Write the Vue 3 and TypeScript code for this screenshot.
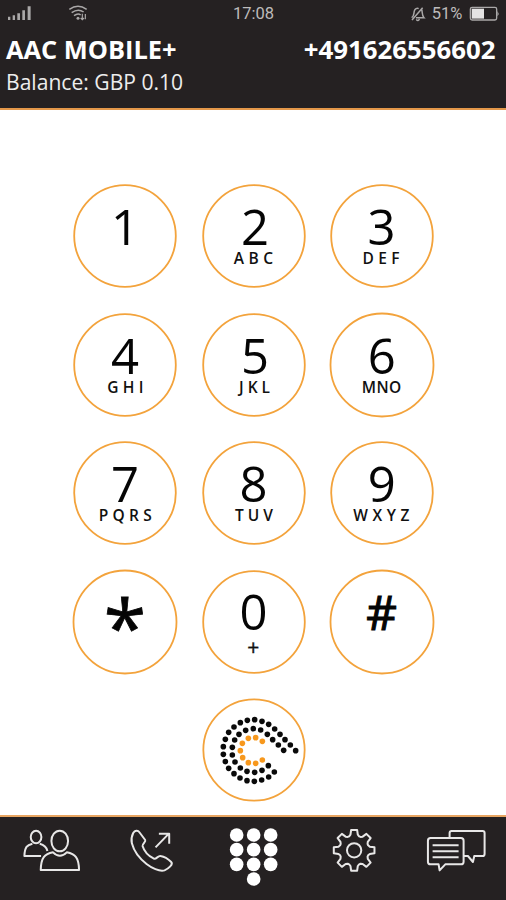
<script setup lang="ts">
interface Key {
  label: string
  x: number
  y: number
  size?: number
  outline?: number
  sub?: string
  subX?: number
  subY?: number
  subWidth?: number
  radius?: number
}

// Label positions are relative to the centre of each key.
const keys: Key[] = [
  { label: '1', x: 0, y: 9.4 },
  { label: '2', x: 1, y: 9.4, sub: 'ABC', subX: -20.2, subY: 28, subWidth: 39.3 },
  { label: '3', x: -0.5, y: 9.4, sub: 'DEF', subX: -19.4, subY: 28, subWidth: 37 },
  { label: '4', x: 0, y: 9.2, sub: 'GHI', subX: -17.7, subY: 27.7, subWidth: 36.2 },
  { label: '5', x: 1, y: 9.2, sub: 'JKL', subX: -14.9, subY: 27.7, subWidth: 30.8 },
  { label: '6', x: -0.2, y: 9.2, sub: 'MNO', subX: -20.3, subY: 27.7, subWidth: 39.4, radius: 51.5 },
  { label: '7', x: 0, y: 8.9, sub: 'PQRS', subX: -26.3, subY: 27.7, subWidth: 53 },
  { label: '8', x: -0.5, y: 8.9, sub: 'TUV', subX: -19, subY: 27.7, subWidth: 38 },
  { label: '9', x: -0.2, y: 8.9, sub: 'WXYZ', subX: -28.8, subY: 27.7, subWidth: 56.3 },
  { label: '*', x: 0, y: 34, size: 77, outline: 0.8, radius: 51.5 },
  { label: '0', x: -0.5, y: 8.4, sub: '+', subX: -6.7, subY: 32.5, subWidth: 12 },
  { label: '#', x: -0.3, y: 8.2, size: 47.5, outline: 1.1, radius: 51.5 },
]

type Point = [number, number]

const blackDots: Point[] = [
  [300, 176], [284, 159], [268, 143], [253, 127], [237, 111], [219, 97], [199, 88], [177, 83],
  [155, 85], [134, 92], [115, 105], [99, 121], [89, 142], [83, 164], [83, 187], [89, 209],
  [99, 229], [115, 245], [133, 258], [154, 266], [176, 268], [198, 264], [219, 255], [236, 240],
  [264, 175], [248, 159], [231, 143], [215, 127], [195, 114], [173, 110], [150, 115], [130, 127],
  [117, 144], [110, 166], [110, 189], [118, 210], [134, 228], [154, 238], [177, 241], [199, 235],
  [218, 221],
]
const orangeDots: Point[] = [
  [200, 148], [180, 137], [158, 139], [140, 154], [134, 176], [141, 197], [158, 212], [180, 214],
  [200, 204],
]
const padDots: Point[] = [
  [170, 90], [221, 90], [272, 90],
  [170, 134], [221, 134], [272, 134],
  [170, 178], [221, 178], [272, 178],
  [221, 222],
]

function gearPath(cx: number, cy: number): string {
  const parts: string[] = []
  for (let i = 0; i < 8; i++) {
    const a = (i * Math.PI) / 4
    const profile: Point[] = [[42, -15], [47, -11], [61, -9], [61, 9], [47, 11], [42, 15]]
    for (const [r, t] of profile) {
      const px = cx + r * Math.cos(a) - t * Math.sin(a)
      const py = cy + r * Math.sin(a) + t * Math.cos(a)
      parts.push(`${px.toFixed(1)} ${py.toFixed(1)}`)
    }
  }
  return `M${parts.join('L')}Z`
}
const gear = gearPath(103, 136)
</script>

<template>
  <div class="screen">
    <header class="header">
      <div class="status">
        <div class="side">
          <svg class="signal" viewBox="20 15 76 50" aria-hidden="true">
            <path d="M23 50h7v10h-7zM37 46h7v14h-7zM51 40h8v20h-8zM66 31h8v29h-8zM82 19h9v41h-9z" />
          </svg>
          <svg class="wifi" viewBox="205 15 60 50" aria-hidden="true">
            <path d="M209 28Q235 10 261 28M216 38Q235 24 252 36M223 47Q235 38 243 45" />
            <circle cx="235" cy="55" r="4.5" />
            <path d="M248 41v18m-5-5 5 5 5-5M257 58V42" class="thin" />
          </svg>
        </div>
        <span class="time">17:08</span>
        <div class="side right">
          <svg class="bell" viewBox="472 18 46 48" aria-hidden="true">
            <path d="M477 53c8-5 6-13 8-20 2-6 8-10 13-7M507 28c3 8 0 18 7 25h-24M478 60l32-37M491 58c3 5 8 5 9-1" />
          </svg>
          <span class="percent">51%</span>
          <svg class="battery" viewBox="649 16 92 46" aria-hidden="true">
            <rect x="653" y="20" width="79" height="38" rx="5" />
            <path d="M657 24h37v30h-37z" class="level" />
            <path d="M735 31q5 8 0 16z" class="level" />
          </svg>
        </div>
      </div>
      <div class="account">
        <h1>AAC MOBILE+</h1>
        <span class="number">+491626556602</span>
      </div>
      <p class="balance">Balance: GBP 0.10</p>
    </header>

    <main class="dialer">
      <div class="keys">
        <button v-for="key in keys" :key="key.label" class="key" type="button">
          <svg viewBox="-52 -52 104 104">
            <circle class="ring" :r="key.radius ?? 50.8" />
            <text
              class="digit"
              :x="key.x"
              :y="key.y"
              :font-size="key.size ?? 49"
              :stroke-width="key.outline ?? 0"
            >{{ key.label }}</text>
            <text
              v-if="key.sub"
              :class="['letters', { plus: key.sub === '+' }]"
              :x="key.subX"
              :y="key.subY"
              :textLength="key.subWidth"
            >{{ key.sub }}</text>
          </svg>
        </button>
      </div>
      <button class="key" type="button" aria-label="Call">
        <svg viewBox="19 18 312 312">
          <circle class="ring logo-ring" cx="175" cy="174" r="152" />
          <circle v-for="([x, y], i) in blackDots" :key="`b${i}`" :cx="x" :cy="y" r="8.4" class="dot" />
          <circle v-for="([x, y], i) in orangeDots" :key="`o${i}`" :cx="x" :cy="y" r="8.4" class="dot orange" />
        </svg>
      </button>
    </main>

    <nav class="nav">
      <a class="tab" aria-label="Contacts">
        <svg viewBox="46.8 36 210 180">
          <ellipse cx="107" cy="96" rx="16" ry="19" />
          <path d="M96 116c-16 4-23 10-24 37h50M118 116c12 3 20 7 23 22" />
          <ellipse cx="178" cy="108" rx="25" ry="31" />
          <path d="M158 142c-26 5-36 16-37 53h115c-1-37-11-48-37-53-13 13-28 13-41 0z" />
        </svg>
      </a>
      <a class="tab" aria-label="Calls">
        <svg viewBox="350.4 36 210 180">
          <path d="M399 84c5-8 14-9 18-3l18 24c3 5-9 11-8 18 5 16 18 30 34 38 7 3 13-10 20-8 12 2 23 9 32 18 7 7-8 20-20 25-15 5-40-8-54-19-22-17-38-39-44-62-3-12-1-21 4-31z" />
          <path d="M466 127l40-41M476 86h31v30" />
        </svg>
      </a>
      <a class="tab" aria-label="Keypad">
        <svg viewBox="114 36 210 180" class="solid">
          <circle v-for="([x, y], i) in padDots" :key="i" :cx="x" :cy="y" r="20.5" />
        </svg>
      </a>
      <a class="tab" aria-label="Settings">
        <svg viewBox="-2.4 36 210 180">
          <path :d="gear" />
          <circle cx="103" cy="136" r="21.5" />
        </svg>
      </a>
      <a class="tab" aria-label="Messages">
        <svg viewBox="301.2 36 210 180">
          <path d="M390 98V84q0-6 6-6h93q6 0 6 6v62q0 7-6 7h-25l-4 18-15-18h-12" />
          <path d="M333 99h91q8 0 8 8v63q0 8-8 8h-47l-17 18-3-18h-24q-8 0-8-8v-63q0-8 8-8z" />
          <path d="M339 121h78M339 139h78M339 157h78" />
        </svg>
      </a>
    </nav>
  </div>
</template>

<style>
body {
  margin: 0;
}
</style>

<style scoped>
.screen {
  display: flex;
  flex-direction: column;
  width: 506px;
  height: 900px;
  background: #fff;
  font-family: "Open Sans", "Noto Sans", sans-serif;
  overflow: hidden;
}
.header {
  box-sizing: border-box;
  height: 110px;
  background: #252122;
  border-bottom: 2px solid #e5984a;
  color: #fff;
}
.status {
  display: flex;
  align-items: center;
  height: 27px;
  padding: 0 6px 0 7px;
  font: 16.5px/27px Roboto, sans-serif;
  color: #bdbbbb;
}
.side {
  flex: 1;
  display: flex;
  align-items: center;
}
.right {
  justify-content: flex-end;
}
.status svg {
  display: block;
  fill: #aaa8a8;
}
.signal {
  width: 25.3px;
  height: 16.7px;
}
.wifi {
  width: 20px;
  height: 16.7px;
  margin-left: 36px;
}
.wifi path,
.bell path {
  fill: none;
  stroke: #aaa8a8;
  stroke-width: 4.5;
}
.wifi .thin {
  stroke-width: 3.5;
}
.bell {
  width: 15.3px;
  height: 16px;
  margin-right: 6px;
}
.percent {
  margin-right: 7px;
}
.battery {
  width: 30.7px;
  height: 15.3px;
}
.battery rect {
  fill: none;
  stroke: #aaa8a8;
  stroke-width: 4;
}
.battery .level {
  fill: #e4e3e3;
}
.account {
  display: flex;
  justify-content: space-between;
  padding: 0 10.5px 0 6px;
  height: 42px;
  line-height: 44px;
  font-weight: 700;
}
h1 {
  margin: 0;
  font-size: 25.4px;
  line-height: inherit;
}
.number {
  font-size: 25.8px;
}
.balance {
  margin: 0;
  padding-left: 6px;
  font-size: 21.1px;
  line-height: 26px;
  color: #ededed;
}
.dialer {
  flex: 1;
  display: flex;
  flex-direction: column;
  align-items: center;
  gap: 24.4px;
  padding: 74.4px 0 0 1px;
}
.keys {
  display: grid;
  grid-template-columns: repeat(3, 104px);
  gap: 24.4px;
}
.key {
  width: 104px;
  height: 104px;
  padding: 0;
  border: 0;
  background: none;
  font-family: inherit;
}
.key svg {
  display: block;
  width: 104px;
  height: 104px;
  overflow: visible;
}
.ring {
  fill: none;
  stroke: #f3a33c;
  stroke-width: 1.8;
}
.logo-ring {
  stroke-width: 5.4;
}
.digit {
  text-anchor: middle;
  fill: #050505;
  stroke: #050505;
}
.letters {
  font-size: 15.5px;
  font-weight: 600;
  fill: #111;
}
.plus {
  font-size: 21px;
  font-weight: 400;
  stroke: #111;
  stroke-width: 0.4;
}
.dot {
  fill: #0a0a0a;
}
.dot.orange {
  fill: #f7981d;
}
.nav {
  box-sizing: border-box;
  display: grid;
  grid-template-columns: repeat(5, 1fr);
  height: 85px;
  background: #252122;
  border-top: 2px solid #e8a561;
}
.tab {
  display: flex;
  justify-content: center;
}
.tab svg {
  width: 70px;
  height: 60px;
  overflow: visible;
  fill: none;
  stroke: #e8e7e7;
  stroke-width: 6;
  stroke-linejoin: round;
}
.tab .solid {
  fill: #fff;
  stroke: none;
}
</style>
